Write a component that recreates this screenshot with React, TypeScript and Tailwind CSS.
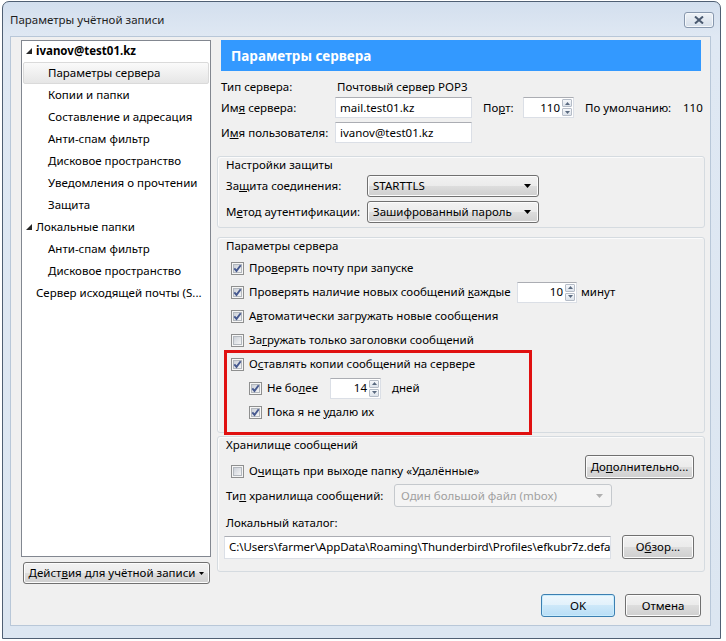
import React from "react";

function Check({ checked }: { checked: boolean }) {
  return (
    <svg width="13" height="13" viewBox="0 0 13 13" className="shrink-0 block">
      <defs>
        <linearGradient id="cbg" x1="0" y1="0" x2="1" y2="1">
          <stop offset="0" stopColor="#c9ced6" />
          <stop offset="1" stopColor="#f7f7f7" />
        </linearGradient>
      </defs>
      <rect x="0.5" y="0.5" width="12" height="12" fill="#f6f6f6" stroke="#8e8f8f" />
      <rect x="2.5" y="2.5" width="8" height="8" fill="url(#cbg)" stroke="#b3b8be" />
      {checked && (
        <path d="M3.3 6.3 L5.5 8.9 L9.7 3.3" fill="none" stroke="#46598f" strokeWidth="1.9" />
      )}
    </svg>
  );
}

function Spin({ value, className }: { value: string; className: string }) {
  return (
    <div className={"flex h-[21px] bg-white border border-[#dbdfe6] border-t-[#abadb3] " + className}>
      <div className="flex-1 flex items-center justify-end pr-[2px]">{value}</div>
      <div className="w-[11px] flex flex-col gap-[1px] py-[1px] pr-[1px]">
        <div className="flex-1 border border-[#b5bcc7] rounded-[1px] bg-[linear-gradient(#f6f8fb,#dde3eb)] flex items-center justify-center">
          <svg width="5" height="3" viewBox="0 0 5 3"><polygon points="2.5,0 5,3 0,3" fill="#5a6a80" /></svg>
        </div>
        <div className="flex-1 border border-[#b5bcc7] rounded-[1px] bg-[linear-gradient(#f6f8fb,#dde3eb)] flex items-center justify-center">
          <svg width="5" height="3" viewBox="0 0 5 3"><polygon points="0,0 5,0 2.5,3" fill="#5a6a80" /></svg>
        </div>
      </div>
    </div>
  );
}

function TextBox({ value, className }: { value: string; className: string }) {
  return (
    <div className={"shrink-0 h-[21px] bg-white border border-[#dbdfe6] border-t-[#abadb3] flex items-center pl-[4px] overflow-hidden whitespace-nowrap " + className}>
      {value}
    </div>
  );
}

function Combo({ value, className, disabled }: { value: string; className: string; disabled?: boolean }) {
  if (disabled) {
    return (
      <div className={"flex items-center border border-[#c5c9cd] rounded-[3px] bg-[#f4f4f4] text-[#a0a0a0] pl-[6px] pr-[8px] " + className}>
        <span className="flex-1">{value}</span>
        <svg width="7" height="4" viewBox="0 0 7 4"><polygon points="0,0 7,0 3.5,4" fill="#b0b0b0" /></svg>
      </div>
    );
  }
  return (
    <div className={"flex items-center border border-[#707070] rounded-[3px] bg-[linear-gradient(#f2f2f2,#ebebeb_50%,#dddddd_50%,#cfcfcf)] shadow-[inset_0_0_0_1px_#fcfcfc] pl-[5px] pr-[7px] " + className}>
      <span className="flex-1">{value}</span>
      <svg width="7" height="4" viewBox="0 0 7 4"><polygon points="0,0 7,0 3.5,4" fill="#000" /></svg>
    </div>
  );
}

function Button({ children, className }: { children: React.ReactNode; className: string }) {
  return (
    <div className={"shrink-0 flex items-center justify-center border border-[#707070] rounded-[3px] bg-[linear-gradient(#f2f2f2,#ebebeb_50%,#dddddd_50%,#cfcfcf)] shadow-[inset_0_0_0_1px_#fcfcfc] " + className}>
      {children}
    </div>
  );
}

function CheckRow({ checked, children, indent }: { checked: boolean; children: React.ReactNode; indent?: boolean }) {
  return (
    <div className={"flex items-center h-[24px] " + (indent ? "pl-[31px]" : "pl-[13px]")}>
      <Check checked={checked} />
      <div className="ml-[5px] flex items-center">{children}</div>
    </div>
  );
}

const Arrow = () => (
  <svg width="6" height="6" viewBox="0 0 6 6" className="absolute left-[4px] top-[8px]">
    <polygon points="6,0 6,6 0,6" fill="#262626" />
  </svg>
);

const treeItems: { t: string; lvl: number; bold?: boolean; arrow?: boolean; sel?: boolean }[] = [
  { t: "ivanov@test01.kz", lvl: 0, bold: true, arrow: true },
  { t: "Параметры сервера", lvl: 1, sel: true },
  { t: "Копии и папки", lvl: 1 },
  { t: "Составление и адресация", lvl: 1 },
  { t: "Анти-спам фильтр", lvl: 1 },
  { t: "Дисковое пространство", lvl: 1 },
  { t: "Уведомления о прочтении", lvl: 1 },
  { t: "Защита", lvl: 1 },
  { t: "Локальные папки", lvl: 0, arrow: true },
  { t: "Анти-спам фильтр", lvl: 1 },
  { t: "Дисковое пространство", lvl: 1 },
  { t: "Сервер исходящей почты (S...", lvl: 0 },
];

export default function App() {
  return (
    <div className="w-[726px] h-[641px] bg-white overflow-hidden font-['Noto_Sans',sans-serif] text-[11.5px] text-black leading-[16px] whitespace-nowrap">
      <div className="ml-[2px] mt-[1px] w-[719px] h-[638px] rounded-t-[7px] border border-[#4f5f73] bg-[linear-gradient(#d3dfee,#dfe8f3_34px,#dce6f1)] flex flex-col">
        {/* Title bar */}
        <div className="h-[34px] flex items-start pl-[7px] pr-[6px]">
          <div className="mt-[10px] flex-1 text-[#1e1e1e] text-[11.5px]">Параметры учётной записи</div>
          <div className="mt-[10px] w-[30px] h-[16px] rounded-[3px] border border-[#8797ad] bg-[linear-gradient(#eef2f7,#d6dfea)] shadow-[inset_0_0_0_1px_#f5f8fb] flex items-center justify-center">
            <svg width="10" height="8" viewBox="0 0 10 8">
              <path d="M1 0.5 L9 7.5 M9 0.5 L1 7.5" stroke="#4a5a70" strokeWidth="2" />
            </svg>
          </div>
        </div>
        {/* Client */}
        <div className="ml-[7px] w-[701px] h-[590px] bg-[#f0f0f0] border border-[#b8c7d8] flex flex-col">
          <div className="flex pt-[3px] pl-[10px]">
            {/* Left column */}
            <div className="w-[190px] flex flex-col">
              <div className="h-[517px] border border-[#828790] bg-white">
                {treeItems.map((it, i) => (
                  <div key={i} className={"relative h-[22px] " + (i === 0 ? "mt-[-1px]" : "")}>
                    {it.sel && (
                      <div className="absolute left-[1px] right-[1px] top-0 bottom-0 rounded-[2px] border border-[#dadada] bg-[linear-gradient(#fafafa,#e6e6e6)]" />
                    )}
                    {it.arrow && <Arrow />}
                    <div className={"relative h-[22px] flex items-center " + (it.lvl === 0 ? "pl-[14px]" : "pl-[26px]") + (it.bold ? " font-bold" : "")}>
                      {it.t}
                    </div>
                  </div>
                ))}
              </div>
              <Button className="mt-[5px] ml-[2px] w-[187px] h-[22px] gap-[4px]">
                <span>
                  Дейст<u>в</u>ия для учётной записи
                </span>
                <svg width="5" height="3" viewBox="0 0 5 3"><polygon points="0,0 5,0 2.5,3" fill="#000" /></svg>
              </Button>
            </div>
            {/* Right column */}
            <div className="ml-[6px] w-[488px] flex flex-col">
              <div className="mx-[4px] h-[31px] bg-[#3399ff] flex items-center pl-[10px] text-white font-bold text-[13.5px]">
                Параметры сервера
              </div>
              <div className="mt-[8px] h-[16px] flex items-center pl-[4px]">
                <span className="w-[114px]">Тип сервера:</span>
                <span className="pl-[2px]">Почтовый сервер POP3</span>
              </div>
              <div className="mt-[2px] h-[21px] flex items-center pl-[4px]">
                <span className="w-[114px]">
                  Им<u>я</u> сервера:
                </span>
                <TextBox value="mail.test01.kz" className="w-[137px]" />
                <span className="ml-[11px] w-[40px]">
                  По<u>р</u>т:
                </span>
                <Spin value="110" className="w-[51px]" />
                <span className="ml-[11px] w-[98px]">По умолчанию:</span>
                <span>110</span>
              </div>
              <div className="mt-[4px] h-[21px] flex items-center pl-[4px]">
                <span className="w-[114px]">
                  И<u>м</u>я пользователя:
                </span>
                <TextBox value="ivanov@test01.kz" className="w-[137px]" />
              </div>

              {/* Group 1 */}
              <div className="mt-[13px] h-[72px] border border-[#d5dbe0] rounded-[3px] shadow-[inset_1px_1px_0_#fbfbfb]">
                <div className="h-[16px] pl-[8px]">Настройки защиты</div>
                <div className="mt-[2px] h-[22px] flex items-center pl-[8px]">
                  <span className="w-[141px]">
                    За<u>щ</u>ита соединения:
                  </span>
                  <Combo value="STARTTLS" className="w-[172px] h-[22px]" />
                </div>
                <div className="mt-[4px] h-[22px] flex items-center pl-[8px]">
                  <span className="w-[141px]">
                    М<u>е</u>тод аутентификации:
                  </span>
                  <Combo value="Зашифрованный пароль" className="w-[172px] h-[22px]" />
                </div>
              </div>

              {/* Group 2 */}
              <div className="relative mt-[9px] h-[196px] border border-[#d5dbe0] rounded-[3px] shadow-[inset_1px_1px_0_#fbfbfb]">
                <div className="h-[16px] pl-[8px]">Параметры сервера</div>
                <div className="mt-[2px]">
                  <CheckRow checked>
                    <span>
                      Про<u>в</u>ерять почту при запуске
                    </span>
                  </CheckRow>
                  <CheckRow checked>
                    <span className="w-[268px]">
                      Проверять наличие новых сообщений <u>к</u>аждые
                    </span>
                    <Spin value="10" className="w-[60px]" />
                    <span className="ml-[4px]">минут</span>
                  </CheckRow>
                  <CheckRow checked>
                    <span>
                      А<u>в</u>томатически загружать новые сообщения
                    </span>
                  </CheckRow>
                  <CheckRow checked={false}>
                    <span>
                      За<u>г</u>ружать только заголовки сообщений
                    </span>
                  </CheckRow>
                  <CheckRow checked>
                    <span>
                      О<u>с</u>тавлять копии сообщений на сервере
                    </span>
                  </CheckRow>
                  <CheckRow checked indent>
                    <span className="w-[63px]">
                      Не бо<u>л</u>ее
                    </span>
                    <Spin value="14" className="w-[51px]" />
                    <span className="ml-[11px]">дней</span>
                  </CheckRow>
                  <CheckRow checked indent>
                    <span>
                      Пока я не <u>у</u>далю их
                    </span>
                  </CheckRow>
                </div>
                <div className="absolute left-[6px] top-[112px] w-[308px] h-[85px] border-[3px] border-[#e01010]" />
              </div>

              {/* Group 3 */}
              <div className="mt-[3px] h-[136px] border border-[#d5dbe0] rounded-[3px] shadow-[inset_1px_1px_0_#fbfbfb]">
                <div className="h-[16px] pl-[8px]">Хранилище сообщений</div>
                <div className="mt-[2px] h-[24px] flex items-start justify-between pr-[10px]">
                  <div className="mt-[4px] flex items-center h-[24px] pl-[13px]">
                    <Check checked={false} />
                    <span className="ml-[5px]">
                      О<u>ч</u>ищать при выходе папку «Удалённые»
                    </span>
                  </div>
                  <Button className="w-[109px] h-[24px]">
                    <span>
                      До<u>п</u>олнительно...
                    </span>
                  </Button>
                </div>
                <div className="mt-[5px] h-[23px] flex items-center pl-[8px]">
                  <span className="w-[168px]">
                    Ти<u>п</u> хранилища сообщений:
                  </span>
                  <Combo disabled value="Один большой файл (mbox)" className="w-[218px] h-[23px]" />
                </div>
                <div className="mt-[8px] h-[16px] pl-[8px]">Локальный каталог:</div>
                <div className="mt-[4px] h-[24px] flex items-center pl-[6px]">
                  <TextBox
                    value={"C:\\Users\\farmer\\AppData\\Roaming\\Thunderbird\\Profiles\\efkubr7z.defa"}
                    className="w-[387px] h-[23px] tracking-[-0.07px]"
                  />
                  <Button className="ml-[11px] w-[72px] h-[24px]">
                    <span>
                      О<u>б</u>зор...
                    </span>
                  </Button>
                </div>
              </div>
            </div>
          </div>
          {/* Bottom buttons */}
          <div className="mt-[10px] flex justify-end pr-[9px] gap-[10px]">
            <div className="w-[74px] h-[23px] flex items-center justify-center border border-[#3c7fb1] rounded-[3px] bg-[linear-gradient(#eef7fd,#e1f1fb_50%,#cde8f9_50%,#b9def6)] shadow-[inset_0_0_0_1px_#c8ecfd]">
              OK
            </div>
            <Button className="w-[76px] h-[23px]">
              <span>Отмена</span>
            </Button>
          </div>
        </div>
      </div>
    </div>
  );
}
